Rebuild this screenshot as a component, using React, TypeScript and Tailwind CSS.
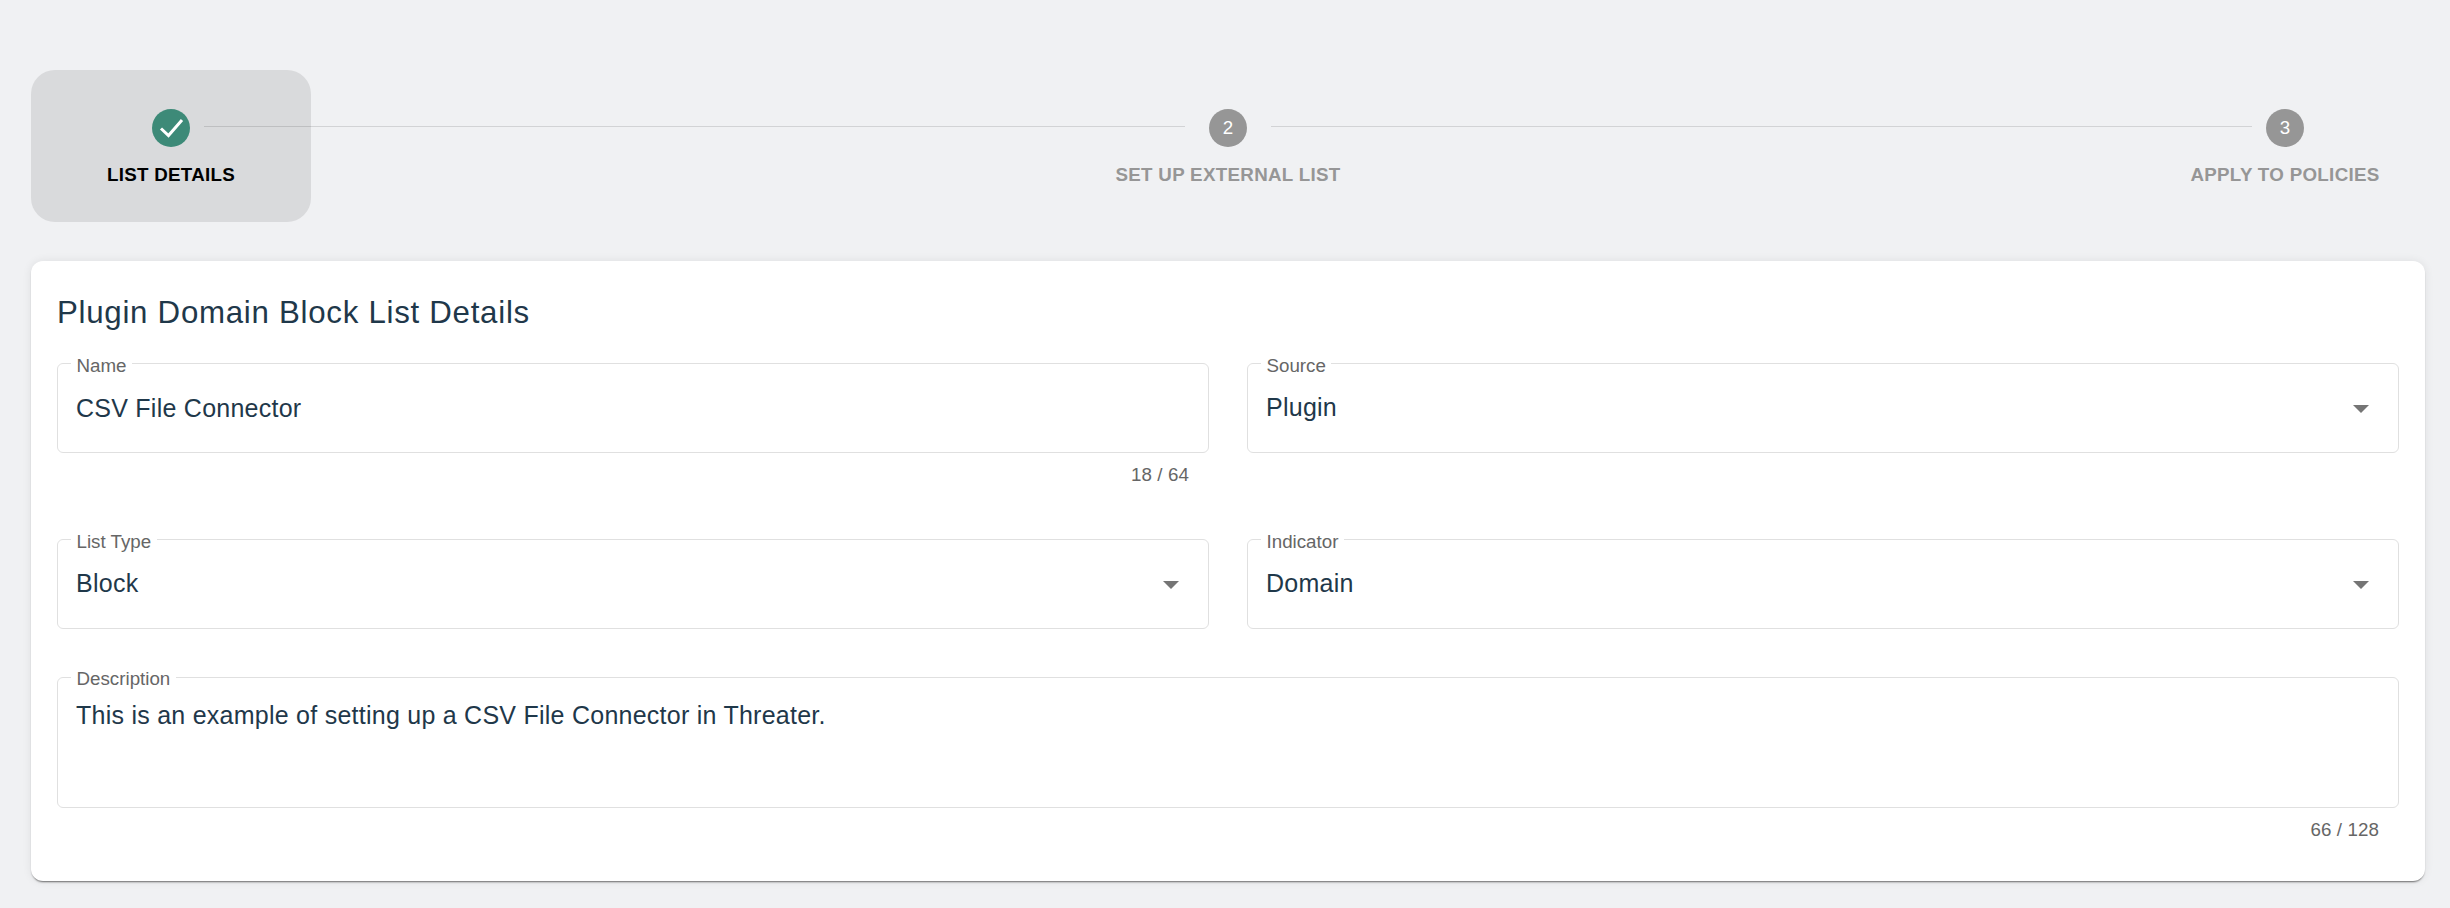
import { ReactNode } from "react";

const sans = "font-['Liberation_Sans',Arial,sans-serif]";

function Step({ label, n, active }: { label: string; n?: number; active?: boolean }) {
  return (
    <div
      className={`w-[280px] h-[152px] shrink-0 rounded-[24px] flex flex-col items-center pt-[39px] ${
        active ? "bg-[#d9dadc]" : ""
      }`}
    >
      <div
        className={`w-[38px] h-[38px] rounded-full flex items-center justify-center text-white text-[18.75px] ${
          active ? "bg-[#3d8a78]" : "bg-[#969696]"
        }`}
      >
        {active ? (
          <svg width="38" height="38" viewBox="0 0 38 38" fill="none">
            <path d="M9 19.5l7.5 7L30 11" stroke="#fff" strokeWidth="3" />
          </svg>
        ) : (
          n
        )}
      </div>
      <div
        className={`mt-[17px] leading-[22px] text-[18.75px] tracking-[0.3px] font-bold uppercase whitespace-nowrap ${
          active ? "text-black" : "text-[#969696]"
        }`}
      >
        {label}
      </div>
    </div>
  );
}

function Field({
  label,
  height = "h-[90px]",
  top,
  children,
}: {
  label: string;
  height?: string;
  top?: boolean;
  children: ReactNode;
}) {
  return (
    <fieldset
      className={`${height} border border-[#e0e0e0] rounded-[6px] flex justify-between pl-[18px] pr-[29px] ${
        top ? "items-start pt-[22px]" : "items-center"
      }`}
    >
      <legend className="h-0 ml-[-5px] px-[5.5px] text-[18.75px] text-[#666666]">
        <span className={`block leading-[22px] ${top ? "-mt-[10px]" : "-mt-[9px]"}`}>{label}</span>
      </legend>
      {children}
    </fieldset>
  );
}

function Select({ label, children }: { label: string; children: string }) {
  return (
    <Field label={label}>
      <span className={`${value} -mt-[2px]`}>{children}</span>
      <svg width="16" height="8" viewBox="0 0 16 8" className="mt-[2px] text-[#757575]">
        <path d="M0 0h16L8 8z" fill="currentColor" />
      </svg>
    </Field>
  );
}

const value = "text-[25px] leading-[30px] tracking-[0.25px] text-[#1f384a]";
const helper = "mt-[11px] pr-[20px] text-right text-[18.75px] tracking-[0.1px] leading-[22px] text-[#666666]";

export default function App() {
  return (
    <div className={`min-h-screen bg-[#f0f1f3] pl-[31px] pr-[25px] pt-[70px] ${sans}`}>
      {/* Stepper */}
      <div className="flex">
        <Step label="List Details" active />
        <div className="flex-1 h-px bg-black/[0.12] mt-[56px] ml-[-107px] mr-[-97px]" />
        <Step label="Set up External List" n={2} />
        <div className="flex-1 h-px bg-black/[0.12] mt-[56px] ml-[-97px] mr-[-107px]" />
        <Step label="Apply to Policies" n={3} />
      </div>

      {/* Details card */}
      <div className="mt-[39px] h-[620px] bg-white rounded-[12px] px-[26px] pt-[33px] shadow-[0_2px_2px_-1px_rgba(0,0,0,0.55),0_0_10px_rgba(0,0,0,0.08)]">
        <h1 className="text-[31.25px] leading-[38px] text-[#1f384a] tracking-[0.72px] mb-[31px]">
          Plugin Domain Block List Details
        </h1>

        <div className="grid grid-cols-2 gap-x-[38px]">
          <div className="h-[176px]">
            <Field label="Name">
              <span className={value}>CSV File Connector</span>
            </Field>
            <div className={helper}>18 / 64</div>
          </div>
          <div>
            <Select label="Source">Plugin</Select>
          </div>
          <div>
            <Select label="List Type">Block</Select>
          </div>
          <div>
            <Select label="Indicator">Domain</Select>
          </div>
        </div>

        <div className="mt-[48px]">
          <Field label="Description" height="h-[131px]" top>
            <span className={value}>This is an example of setting up a CSV File Connector in Threater.</span>
          </Field>
          <div className={helper}>66 / 128</div>
        </div>
      </div>
    </div>
  );
}
